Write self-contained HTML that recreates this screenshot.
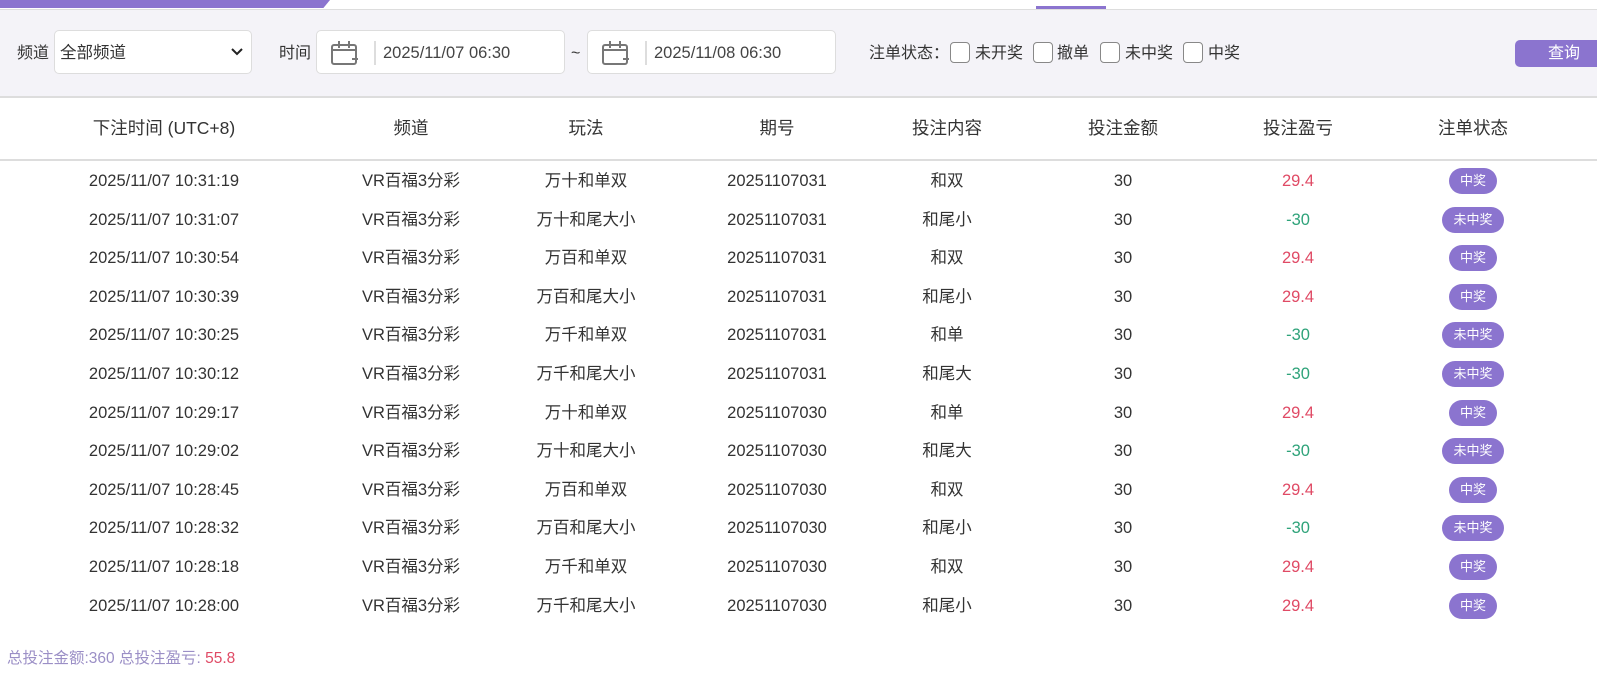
<!DOCTYPE html>
<html><head><meta charset="utf-8"><style>
*{box-sizing:border-box;margin:0;padding:0}
body{width:1597px;height:699px;overflow:hidden;background:#fff;font-family:"Liberation Sans","Noto Sans CJK SC",sans-serif;color:#333;font-size:16.5px;position:relative;line-height:20px}
.topbar{position:absolute;left:0;top:0;width:330px;height:8px;background:#8b74cf;clip-path:polygon(0 0,100% 0,98% 100%,0 100%)}
.tabline{position:absolute;left:1036px;top:6px;width:70px;height:3px;background:#8b74cf}
.filter{position:absolute;left:0;top:9px;width:1597px;height:89px;background:#f4f3f8;border-top:1px solid #ddd;border-bottom:2px solid #ddd}
.abs{position:absolute}
.box{position:absolute;background:#fff;border:1px solid #ddd;border-radius:5px;height:44px;top:20px}
.lbl{position:absolute;top:33px;font-size:16px;color:#333}
.cb{position:absolute;top:32px;width:20px;height:21px;border:1px solid #888;border-radius:4px;background:#fff}
.btn{position:absolute;left:1515px;top:30px;width:90px;height:27px;background:#8b74cf;border-radius:5px;color:#fff;font-size:16px;padding:4px 0 0 33px}
.thead{position:absolute;top:98px;left:0;width:1597px;height:63px;border-bottom:2px solid #ddd}
.c{position:absolute;transform:translateX(-50%);white-space:nowrap;line-height:20px}
.th{top:20px;font-size:17.5px;color:#333}
.row{position:absolute;left:0;width:1597px;height:38px}
.row .c{top:9px}
.red{color:#e04a65}.green{color:#2fa37a}
.badge{position:absolute;transform:translateX(-50%);top:6px!important;height:26px;border-radius:13px;background:#8b74cf;color:#fff;font-size:13px;line-height:26px!important;text-align:center}
</style></head><body>
<div class="topbar"></div>
<div class="tabline"></div>
<div class="filter">
<div class="lbl" style="left:17px;top:34px">频道</div>
<div class="box" style="left:54px;width:198px;"><span class="abs" style="left:5px;top:12px">全部频道</span>
<svg class="abs" style="left:176px;top:16px" width="12" height="10" viewBox="0 0 12 10"><path d="M1 2l5 5 5-5" stroke="#222" stroke-width="2" fill="none"/></svg></div>
<div class="lbl" style="left:279px;top:34px">时间</div>
<div class="box" style="left:316px;width:249px"><svg class="abs" style="left:13px;top:9px" width="30" height="26" viewBox="0 0 30 26"><rect x="2" y="5" width="24" height="19" rx="2" fill="none" stroke="#777" stroke-width="2"/><path d="M2 10h24M9 1v7M19 1v7M22 19h6" stroke="#777" stroke-width="2"/></svg><div class="abs" style="left:57px;top:10px;width:2px;height:24px;background:#ddd"></div><span class="abs" style="left:66px;top:12px;color:#444">2025/11/07 06:30</span></div>
<div class="lbl" style="left:571px;top:34px">~</div>
<div class="box" style="left:587px;width:249px"><svg class="abs" style="left:13px;top:9px" width="30" height="26" viewBox="0 0 30 26"><rect x="2" y="5" width="24" height="19" rx="2" fill="none" stroke="#777" stroke-width="2"/><path d="M2 10h24M9 1v7M19 1v7M22 19h6" stroke="#777" stroke-width="2"/></svg><div class="abs" style="left:57px;top:10px;width:2px;height:24px;background:#ddd"></div><span class="abs" style="left:66px;top:12px;color:#444">2025/11/08 06:30</span></div>
<div class="lbl" style="left:869px;top:34px">注单状态：</div>
<div class="cb" style="left:950px"></div><div class="lbl" style="left:975px;top:34px">未开奖</div>
<div class="cb" style="left:1033px"></div><div class="lbl" style="left:1057px;top:34px">撤单</div>
<div class="cb" style="left:1100px"></div><div class="lbl" style="left:1125px;top:34px">未中奖</div>
<div class="cb" style="left:1183px"></div><div class="lbl" style="left:1208px;top:34px">中奖</div>
<div class="btn">查询</div>
</div>
<div class="thead">
<span class="c th" style="left:164px">下注时间 (UTC+8)</span>
<span class="c th" style="left:411px">频道</span>
<span class="c th" style="left:586px">玩法</span>
<span class="c th" style="left:777px">期号</span>
<span class="c th" style="left:947px">投注内容</span>
<span class="c th" style="left:1123px">投注金额</span>
<span class="c th" style="left:1298px">投注盈亏</span>
<span class="c th" style="left:1473px">注单状态</span>
</div>
<div class="abs" style="left:7px;top:649px;font-size:15.5px;color:#9b8fc6">总投注金额:360 总投注盈亏: <span class="red">55.8</span></div>
<div class="row" style="top:162px"><span class="c" style="left:164px">2025/11/07 10:31:19</span><span class="c" style="left:411px">VR百福3分彩</span><span class="c" style="left:586px">万十和单双</span><span class="c" style="left:777px">20251107031</span><span class="c" style="left:947px">和双</span><span class="c" style="left:1123px">30</span><span class="c red" style="left:1298px">29.4</span><span class="badge" style="left:1473px;width:48px">中奖</span></div>
<div class="row" style="top:200.6px"><span class="c" style="left:164px">2025/11/07 10:31:07</span><span class="c" style="left:411px">VR百福3分彩</span><span class="c" style="left:586px">万十和尾大小</span><span class="c" style="left:777px">20251107031</span><span class="c" style="left:947px">和尾小</span><span class="c" style="left:1123px">30</span><span class="c green" style="left:1298px">-30</span><span class="badge" style="left:1473px;width:62px">未中奖</span></div>
<div class="row" style="top:239.2px"><span class="c" style="left:164px">2025/11/07 10:30:54</span><span class="c" style="left:411px">VR百福3分彩</span><span class="c" style="left:586px">万百和单双</span><span class="c" style="left:777px">20251107031</span><span class="c" style="left:947px">和双</span><span class="c" style="left:1123px">30</span><span class="c red" style="left:1298px">29.4</span><span class="badge" style="left:1473px;width:48px">中奖</span></div>
<div class="row" style="top:277.8px"><span class="c" style="left:164px">2025/11/07 10:30:39</span><span class="c" style="left:411px">VR百福3分彩</span><span class="c" style="left:586px">万百和尾大小</span><span class="c" style="left:777px">20251107031</span><span class="c" style="left:947px">和尾小</span><span class="c" style="left:1123px">30</span><span class="c red" style="left:1298px">29.4</span><span class="badge" style="left:1473px;width:48px">中奖</span></div>
<div class="row" style="top:316.4px"><span class="c" style="left:164px">2025/11/07 10:30:25</span><span class="c" style="left:411px">VR百福3分彩</span><span class="c" style="left:586px">万千和单双</span><span class="c" style="left:777px">20251107031</span><span class="c" style="left:947px">和单</span><span class="c" style="left:1123px">30</span><span class="c green" style="left:1298px">-30</span><span class="badge" style="left:1473px;width:62px">未中奖</span></div>
<div class="row" style="top:355px"><span class="c" style="left:164px">2025/11/07 10:30:12</span><span class="c" style="left:411px">VR百福3分彩</span><span class="c" style="left:586px">万千和尾大小</span><span class="c" style="left:777px">20251107031</span><span class="c" style="left:947px">和尾大</span><span class="c" style="left:1123px">30</span><span class="c green" style="left:1298px">-30</span><span class="badge" style="left:1473px;width:62px">未中奖</span></div>
<div class="row" style="top:393.6px"><span class="c" style="left:164px">2025/11/07 10:29:17</span><span class="c" style="left:411px">VR百福3分彩</span><span class="c" style="left:586px">万十和单双</span><span class="c" style="left:777px">20251107030</span><span class="c" style="left:947px">和单</span><span class="c" style="left:1123px">30</span><span class="c red" style="left:1298px">29.4</span><span class="badge" style="left:1473px;width:48px">中奖</span></div>
<div class="row" style="top:432.2px"><span class="c" style="left:164px">2025/11/07 10:29:02</span><span class="c" style="left:411px">VR百福3分彩</span><span class="c" style="left:586px">万十和尾大小</span><span class="c" style="left:777px">20251107030</span><span class="c" style="left:947px">和尾大</span><span class="c" style="left:1123px">30</span><span class="c green" style="left:1298px">-30</span><span class="badge" style="left:1473px;width:62px">未中奖</span></div>
<div class="row" style="top:470.8px"><span class="c" style="left:164px">2025/11/07 10:28:45</span><span class="c" style="left:411px">VR百福3分彩</span><span class="c" style="left:586px">万百和单双</span><span class="c" style="left:777px">20251107030</span><span class="c" style="left:947px">和双</span><span class="c" style="left:1123px">30</span><span class="c red" style="left:1298px">29.4</span><span class="badge" style="left:1473px;width:48px">中奖</span></div>
<div class="row" style="top:509.4px"><span class="c" style="left:164px">2025/11/07 10:28:32</span><span class="c" style="left:411px">VR百福3分彩</span><span class="c" style="left:586px">万百和尾大小</span><span class="c" style="left:777px">20251107030</span><span class="c" style="left:947px">和尾小</span><span class="c" style="left:1123px">30</span><span class="c green" style="left:1298px">-30</span><span class="badge" style="left:1473px;width:62px">未中奖</span></div>
<div class="row" style="top:548px"><span class="c" style="left:164px">2025/11/07 10:28:18</span><span class="c" style="left:411px">VR百福3分彩</span><span class="c" style="left:586px">万千和单双</span><span class="c" style="left:777px">20251107030</span><span class="c" style="left:947px">和双</span><span class="c" style="left:1123px">30</span><span class="c red" style="left:1298px">29.4</span><span class="badge" style="left:1473px;width:48px">中奖</span></div>
<div class="row" style="top:586.6px"><span class="c" style="left:164px">2025/11/07 10:28:00</span><span class="c" style="left:411px">VR百福3分彩</span><span class="c" style="left:586px">万千和尾大小</span><span class="c" style="left:777px">20251107030</span><span class="c" style="left:947px">和尾小</span><span class="c" style="left:1123px">30</span><span class="c red" style="left:1298px">29.4</span><span class="badge" style="left:1473px;width:48px">中奖</span></div>
</body></html>
